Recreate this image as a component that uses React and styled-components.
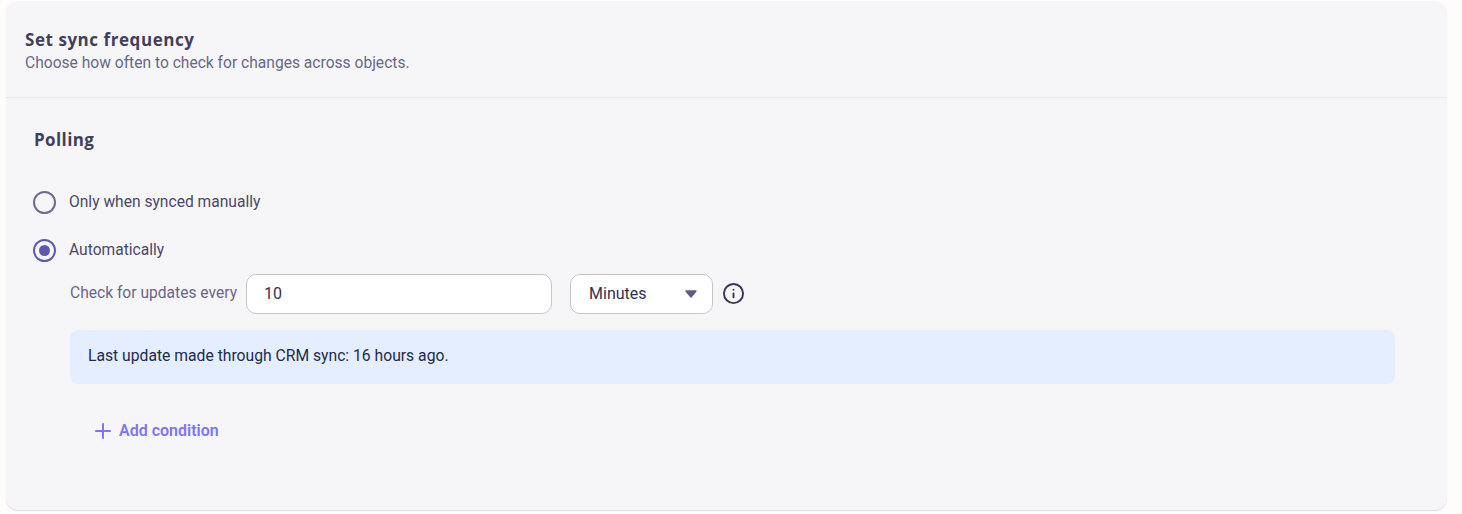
import React from "react";
import styled, { createGlobalStyle } from "styled-components";
import { Plus, Info } from "lucide-react";

const GlobalStyle = createGlobalStyle`
	html, body {
		margin: 0;
		padding: 0;
		background: #fffdfb;
		font-family: Roboto, "Noto Sans", sans-serif;
	}
`;

const Page = styled.div`
	width: 1462px;
	height: 514px;
	padding: 1px 15px 4px 6px;
	box-sizing: border-box;
`;

const Card = styled.section`
	height: 100%;
	box-sizing: border-box;
	background: #f6f6f9;
	border-radius: 12px;
	box-shadow: 0 1px 1px rgba(60, 60, 90, 0.16);
`;

const CardHeader = styled.header`
	height: 97px;
	box-sizing: border-box;
	padding: 29px 19px 0;
	border-bottom: 1px solid #e8e8ed;
`;

const Title = styled.h2`
	margin: 0;
	font-family: "Open Sans", sans-serif;
	font-size: 17px;
	letter-spacing: 0.55px;
	line-height: 20px;
	font-weight: 700;
	color: #423f5c;
`;

const Subtitle = styled.p`
	margin: 3px 0 0;
	font-size: 15.6px;
	line-height: 20px;
	font-weight: 400;
	color: #6a6785;
`;

const CardBody = styled.div`
	padding: 32px 52px 0 27px;
`;

const SectionTitle = styled.h3`
	margin: 0 0 40px 1px;
	font-family: "Open Sans", sans-serif;
	font-size: 17px;
	letter-spacing: 0.4px;
	line-height: 20px;
	font-weight: 700;
	color: #423f5c;
`;

const RadioRow = styled.label`
	display: flex;
	align-items: center;
	gap: 13px;
	height: 24px;
	margin-bottom: ${(p) => p.$gap}px;
`;

const RadioMark = styled.span`
	width: 23px;
	height: 23px;
	box-sizing: border-box;
	border-radius: 50%;
	border: 2px solid ${(p) => (p.$checked ? "#5c5ab0" : "#6f6c8a")};
	display: flex;
	align-items: center;
	justify-content: center;

	&::after {
		content: "";
		display: ${(p) => (p.$checked ? "block" : "none")};
		width: 11px;
		height: 11px;
		border-radius: 50%;
		background: #5c5ab0;
	}
`;

const RadioText = styled.span`
	font-size: 15.6px;
	color: #4b4866;
`;

const Indented = styled.div`
	padding: 12px 0 0 37px;
`;

const FieldRow = styled.div`
	display: flex;
	align-items: center;
	height: 40px;
`;

const FieldLabel = styled.span`
	font-size: 15.6px;
	color: #6a6785;
	margin: 0 9px 2px 0;
`;

const NumberInput = styled.div`
	width: 306px;
	height: 40px;
	box-sizing: border-box;
	padding: 0 17px 2px;
	display: flex;
	align-items: center;
	background: #fff;
	border: 1px solid #c6c5cf;
	border-radius: 10px;
	font-size: 16px;
	color: #34324e;
	margin-right: 18px;
`;

const SelectBox = styled.div`
	width: 143px;
	height: 40px;
	box-sizing: border-box;
	padding: 0 15px 2px 18px;
	display: flex;
	align-items: center;
	justify-content: space-between;
	background: #fff;
	border: 1px solid #c6c5cf;
	border-radius: 10px;
	font-size: 16px;
	color: #34324e;
	margin-right: 9px;
`;

const CaretIcon = styled.svg`
	width: 12px;
	height: 8px;
	margin-top: 2px;
	fill: #605d7c;
	stroke: #605d7c;
	stroke-width: 1.4;
	stroke-linejoin: round;
`;

const InfoIcon = styled(Info)`
	color: #3a3856;
	margin-bottom: 2px;
`;

const Notice = styled.div`
	margin-top: 16px;
	height: 54px;
	box-sizing: border-box;
	padding: 0 18px 3px;
	display: flex;
	align-items: center;
	background: #e4eeff;
	border-radius: 8px;
	font-size: 15.7px;
	color: #1c2a4f;
`;

const AddButton = styled.button`
	margin: 35px 0 0 21px;
	padding: 0;
	display: flex;
	align-items: center;
	gap: 4px;
	border: 0;
	background: none;
	font-family: inherit;
	font-size: 16px;
	font-weight: 600;
	line-height: 24px;
	color: #8073fa;
`;

export default function App() {
	return (
		<Page>
			<GlobalStyle />
			<Card>
				<CardHeader>
					<Title>Set sync frequency</Title>
					<Subtitle>Choose how often to check for changes across objects.</Subtitle>
				</CardHeader>
				<CardBody>
					<SectionTitle>Polling</SectionTitle>
					<RadioRow $gap={24}>
						<RadioMark />
						<RadioText>Only when synced manually</RadioText>
					</RadioRow>
					<RadioRow $gap={0}>
						<RadioMark $checked />
						<RadioText>Automatically</RadioText>
					</RadioRow>
					<Indented>
						<FieldRow>
							<FieldLabel>Check for updates every</FieldLabel>
							<NumberInput>10</NumberInput>
							<SelectBox>
								Minutes
								<CaretIcon viewBox="0 0 12 8">
									<path d="M1 1 H11 L6 7 Z" />
								</CaretIcon>
							</SelectBox>
							<InfoIcon size={23} strokeWidth={2} />
						</FieldRow>
						<Notice>Last update made through CRM sync: 16 hours ago.</Notice>
						<AddButton>
							<Plus size={24} strokeWidth={2} />
							Add condition
						</AddButton>
					</Indented>
				</CardBody>
			</Card>
		</Page>
	);
}
